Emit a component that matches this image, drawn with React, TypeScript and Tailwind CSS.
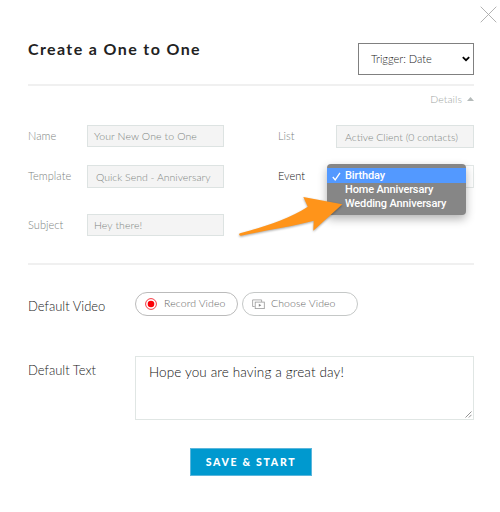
import { useState } from 'react';

const events = ['Birthday', 'Home Anniversary', 'Wedding Anniversary'];

const labelClass = 'shrink-0 text-[11px] font-light leading-[22px] tracking-[0.05px]';
const fieldClass =
  'border border-[#dde3e2] bg-[#f4f4f4] text-[10.5px] font-light whitespace-nowrap overflow-hidden';

function CloseIcon() {
  return (
    <svg width="17" height="17" viewBox="0 0 17 17" fill="none" stroke="#a9a9a9" strokeWidth="0.9">
      <path d="M0.7 0.7 16.3 16.3M16.3 0.7 0.7 16.3" />
    </svg>
  );
}

function RecordIcon() {
  return (
    <svg width="12" height="12" viewBox="0 0 12 12">
      <circle cx="6" cy="6" r="5.4" fill="none" stroke="#f5222d" strokeWidth="0.9" />
      <circle cx="6" cy="6" r="3.3" fill="#fb0007" />
    </svg>
  );
}

function LibraryIcon() {
  return (
    <svg width="13" height="11" viewBox="0 0 13 11" fill="none" stroke="#999" strokeWidth="0.8">
      <path d="M2.7 7.5H0.6V0.9H9.6V2.9" />
      <rect x="3.2" y="3.1" width="9.1" height="6.5" />
      <path d="M6.8 4.8v3l2.5-1.5z" fill="#888" stroke="none" />
    </svg>
  );
}

function Arrow() {
  return (
    <svg
      className="absolute left-[236px] top-[192px] z-20 drop-shadow-[0_1px_1px_rgba(0,0,0,0.35)]"
      width="110"
      height="46"
      viewBox="236 192 110 46"
    >
      <path
        d="M240 233.2C265 226.5 288 219.5 307.8 206.7L303.3 197L342.3 204.3L313.3 230.7L313.7 220.8C293 226.5 265 230.5 241 235.7C239 236 238.5 233.7 240 233.2Z"
        fill="#ff941a"
      />
    </svg>
  );
}

export default function App() {
  const [selected, setSelected] = useState('Birthday');

  return (
    <main className="relative h-[512px] w-[500px] overflow-hidden bg-white pl-7 pr-[26px] font-['Lato',sans-serif]">
      <button className="absolute left-[480px] top-[6px]" aria-label="Close">
        <CloseIcon />
      </button>

      {/* Header */}
      <header className="flex h-[86px] items-start justify-between border-b-2 border-[#f0f0f0] pt-[43px]">
        <h1 className="text-[16px] font-bold leading-[12px] tracking-[1.38px] text-[#222]">
          Create a One to One
        </h1>
        <button className="flex h-8 w-[116px] items-center justify-between border border-[#808080] pl-3 pr-[3px] text-[11px] font-light text-[#222]">
          Trigger: Date
          <svg width="8" height="6" viewBox="0 0 8 6" fill="none" stroke="#000" strokeWidth="1.8">
            <path d="M0.8 1.2 4 4.2 7.2 1.2" />
          </svg>
        </button>
      </header>

      <div className="flex h-[39px] items-start justify-end gap-[5px] pt-[6px] text-[10.5px] font-light leading-[14px] tracking-[0.1px] text-[#a0a6a4]">
        <span>Details</span>
        <svg className="mt-[5px]" width="7" height="4" viewBox="0 0 7 4" fill="#b5bbba">
          <path d="M3.5 0 7 4H0z" />
        </svg>
      </div>

      {/* Details */}
      <section className="flex h-[140px] justify-between border-b-2 border-[#f0f0f0] text-[#7e8482]">
        <div className="flex w-[196px] flex-col">
          <div className="flex h-10">
            <span className={`${labelClass} w-[59px]`}>Name</span>
            <div className={`${fieldClass} h-[22px] flex-1 pl-[6px] leading-[20px] tracking-[0.1px]`}>
              Your New One to One
            </div>
          </div>
          <div className="flex h-[49px]">
            <span className={`${labelClass} w-[59px]`}>Template</span>
            <div className={`${fieldClass} h-[23px] flex-1 pl-2 leading-[22px]`}>
              Quick Send - Anniversary
            </div>
          </div>
          <div className="flex">
            <span className={`${labelClass} w-[59px]`}>Subject</span>
            <div className={`${fieldClass} h-[22px] flex-1 pl-[6px] leading-[20px] tracking-[0.1px]`}>
              Hey there!
            </div>
          </div>
        </div>

        <div className="flex w-[196px] flex-col">
          <div className="flex h-10">
            <span className={`${labelClass} w-[58px]`}>List</span>
            <div className={`${fieldClass} h-[23px] flex-1 pl-2 leading-[22px]`}>
              Active Client (0 contacts)
            </div>
          </div>
          <div className="relative flex">
            <span className={`${labelClass} w-[58px] text-[#111]`}>Event</span>
            <div className="h-[23px] flex-1 border border-[#e3e8e7]" />
            <ul className="absolute left-[49px] top-[-1px] z-10 h-[51px] w-[139px] rounded-[4px] bg-[#868686] pt-1 font-['Roboto',sans-serif] text-[11px] font-medium tracking-[-0.15px] text-white shadow-[0_4px_10px_rgba(0,0,0,0.3)]">
              {events.map((event) => (
                <li
                  key={event}
                  onClick={() => setSelected(event)}
                  className={`flex items-center whitespace-nowrap pt-px ${
                    event === selected ? 'h-[15px] bg-[#5399ff]' : 'h-[14px]'
                  }`}
                >
                  <span className="flex w-[18px] shrink-0 justify-end pr-[4px]">
                    {event === selected && (
                      <svg width="9" height="9" viewBox="0 0 9 9" fill="none" stroke="#fff" strokeWidth="1.3">
                        <path d="M0.8 5 3.2 7.9 8 0.8" />
                      </svg>
                    )}
                  </span>
                  {event}
                </li>
              ))}
            </ul>
          </div>
        </div>
      </section>

      {/* Message */}
      <section className="flex pt-[27px]">
        <span className="w-[107px] pt-[5px] text-[13px] font-light leading-[18px] text-[#222]">
          Default Video
        </span>
        <button className="flex h-6 w-[103px] items-center gap-[7px] rounded-full border border-[#bbb] pl-[9px] text-[10.5px] font-light tracking-[0.1px] text-[#666]">
          <RecordIcon />
          Record Video
        </button>
        <button className="ml-1 flex h-6 w-[116px] items-center gap-[6px] rounded-full border border-[#c5c8c7] pl-[9px] text-[10.5px] font-light tracking-[0.1px] text-[#666]">
          <LibraryIcon />
          Choose Video
        </button>
      </section>

      <section className="flex pt-10">
        <span className="w-[107px] pt-[5px] text-[13px] font-light leading-[18px] text-[#222]">
          Default Text
        </span>
        <div className="relative h-16 flex-1 border border-[#e0e6e4] pl-[13px] pt-[6px] text-[13.5px] font-light leading-[18px] tracking-[0.12px] text-[#111]">
          Hope you are having a great day!
          <svg
            className="absolute bottom-px right-px"
            width="7"
            height="7"
            viewBox="0 0 7 7"
            stroke="#777"
            strokeWidth="0.8"
          >
            <path d="M0.5 6.5 6.5 0.5M3.8 6.5 6.5 3.8" />
          </svg>
        </div>
      </section>

      <button className="ml-[162px] mt-7 flex h-7 w-[122px] items-center justify-center border border-[#5ab6dc] bg-[#0099cf] pt-px text-[10.5px] font-black tracking-[1.7px] text-white">
        SAVE &amp; START
      </button>

      <Arrow />
    </main>
  );
}
